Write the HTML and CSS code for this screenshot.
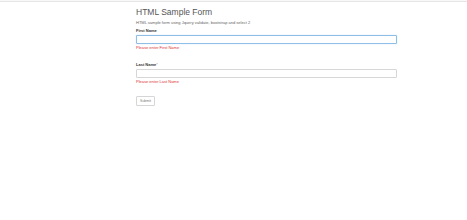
FILE: index.html
```html
<!DOCTYPE html>
<html>
<head>
<meta charset="utf-8">
<title>HTML Sample Form</title>
<link rel="stylesheet" href="styles.css">
</head>
<body>
<div class="topbar"></div>
<div class="container">
  <h1 class="title">HTML Sample Form</h1>
  <p class="lead">HTML sample form using Jquery validate, bootstrap and select 2</p>
  <form class="form">
    <div class="group">
      <label class="label">First Name</label>
      <input class="input input-focus" type="text">
      <div class="error">Please enter First Name</div>
    </div>
    <div class="group group-next">
      <label class="label">Last Name<span class="req">*</span></label>
      <input class="input" type="text">
      <div class="error">Please enter Last Name</div>
    </div>
    <button class="btn" type="button">Submit</button>
  </form>
</div>
</body>
</html>
```
FILE: styles.css
```css
html, body {
  margin: 0;
  padding: 0;
  background: #ffffff;
  font-family: "Liberation Sans", Arial, sans-serif;
}
.topbar {
  height: 1px;
  background: #f8f8f8;
  border-bottom: 1px solid #e6e6e6;
}
.container {
  margin-left: 136px;
  width: 261px;
}
.title {
  margin: 5px 0 0;
  font-size: 8.5px;
  line-height: 10px;
  font-weight: 400;
  color: #555555;
}
.lead {
  margin: 2.5px 0 0;
  font-size: 4px;
  line-height: 5px;
  color: #666666;
}
.form {
  margin: 0;
}
.group {
  margin-top: 3px;
}
.group-next {
  margin-top: 12px;
}
.label {
  display: block;
  font-size: 4px;
  line-height: 5px;
  font-weight: 700;
  color: #333333;
}
.req {
  color: #888888;
  font-weight: 400;
}
.input {
  display: block;
  box-sizing: border-box;
  width: 261px;
  height: 9px;
  margin: 2.5px 0 0;
  padding: 0 2px;
  border: 1px solid #d6d6d6;
  border-radius: 1px;
  background: #ffffff;
  outline: none;
  font-size: 4px;
}
.input-focus {
  border-color: #8fbfe6;
  box-shadow: 0 0 1px rgba(102, 175, 233, 0.6);
}
.error {
  margin-top: 0.5px;
  font-size: 4px;
  line-height: 5px;
  color: #dd3333;
}
.btn {
  display: block;
  box-sizing: border-box;
  margin-top: 12.5px;
  width: 19px;
  height: 10px;
  padding: 0;
  border: 1px solid #d6d6d6;
  border-radius: 1px;
  background: #ffffff;
  font-family: "Liberation Sans", Arial, sans-serif;
  font-size: 3.5px;
  color: #777777;
}
```
